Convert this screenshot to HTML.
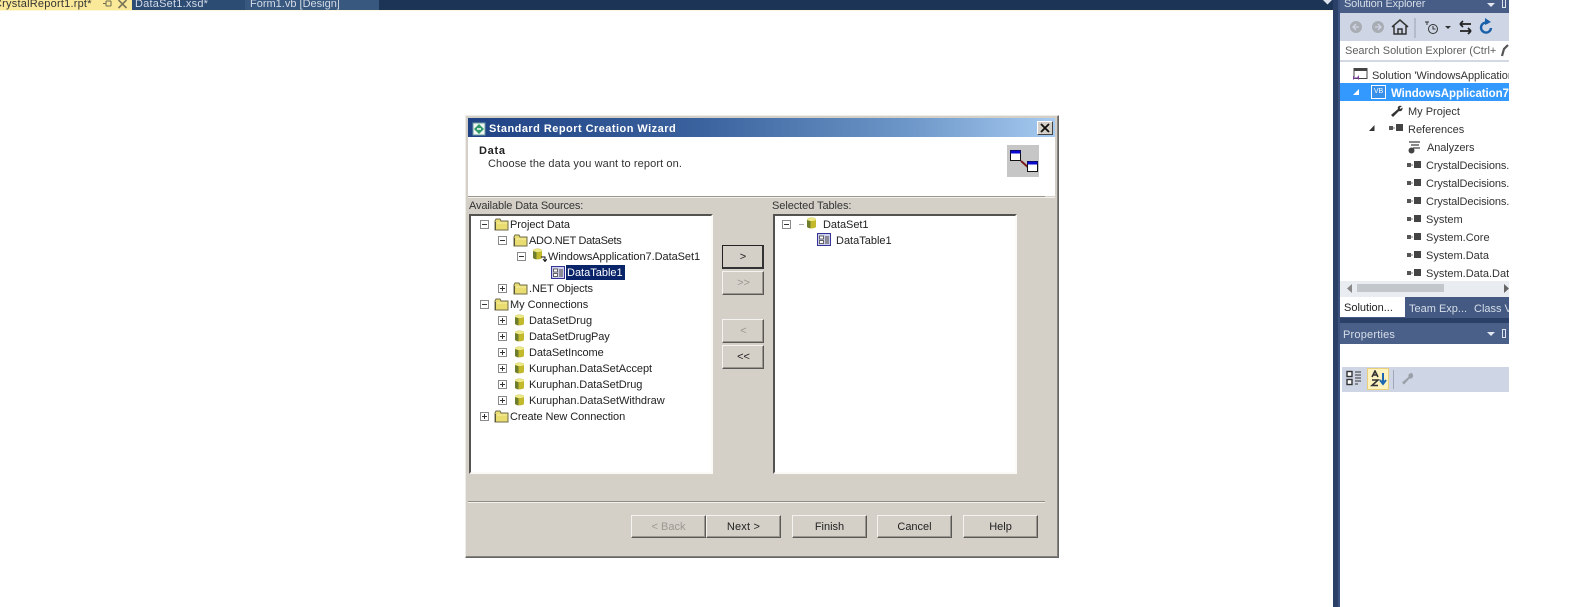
<!DOCTYPE html>
<html><head><meta charset="utf-8">
<style>
html,body{margin:0;padding:0;background:#fff;}
#p{position:relative;width:1569px;height:607px;overflow:hidden;background:#fff;font-family:"Liberation Sans",sans-serif;font-size:11px;color:#222;filter:blur(.3px);}
#p div,#p svg{position:absolute;}
.t{white-space:nowrap;line-height:14px;height:14px;margin-top:1px;}
.w{letter-spacing:-.05px;}
.btn{background:#d4d0c8;border:1px solid;border-color:#f4f3ef #5a5854 #5a5854 #f4f3ef;box-sizing:border-box;text-align:center;line-height:22px;color:#222;box-shadow:inset -1px -1px 0 #9a9790;}
.dis{color:#9a9892;}
.tree{background:#fff;box-sizing:border-box;border:2px solid;border-color:#55534f #fbfaf6 #fbfaf6 #55534f;}
.exp{width:9px;height:9px;box-sizing:border-box;border:1px solid #8a8a8a;background:#fff;}
.exp:before{content:"";position:absolute;left:1px;top:3px;width:5px;height:1px;background:#333;}
.plus:after{content:"";position:absolute;left:3px;top:1px;width:1px;height:5px;background:#333;}
.se{color:#333;font-size:11px;letter-spacing:0;}
</style></head><body>
<div id="p">
<svg width="0" height="0" style="left:0;top:0">
<defs>
<symbol id="folder" viewBox="0 0 15 13"><path d="M1 3 L2 1 H6 L7 3 H14 V12 H1 Z" fill="#e9dd72" stroke="#6f6c48" stroke-width="1"/><path d="M1 12 V4 H2 V12Z" fill="#55533a"/><path d="M3 5 H13" stroke="#f8f0a0"/></symbol>
<symbol id="db" viewBox="0 0 11 12"><path d="M1 2.500 C1 0 10 0 10 2.500 V9.500 C10 12 1 12 1 9.500 Z" fill="#c2b92c"/><path d="M1 2.500 C1 4.500 10 4.500 10 2.500 C10 .5 1 .5 1 2.500Z" fill="#eee98a"/><path d="M1 3 V9.500 C1 10.500 3 11.300 4.500 11.300 V4.300 Z" fill="#6f7e2e"/></symbol>
<symbol id="tbl" viewBox="0 0 14 13"><rect x=".5" y=".5" width="13" height="12" fill="#cfd0ec" stroke="#33339a"/><rect x="2.500" y="3" width="4" height="3" fill="#fff" stroke="#444" stroke-width=".8"/><rect x="2.500" y="7.500" width="4" height="3" fill="#fff" stroke="#444" stroke-width=".8"/><path d="M8 4h4M8 6h4M8 8h4M8 10h4" stroke="#444" stroke-width="1"/></symbol>
<symbol id="ref" viewBox="0 0 14 8"><rect x="0" y="2" width="4" height="4" fill="#555"/><rect x="4" y="3.500" width="2" height="1" fill="#777"/><rect x="7" y="0" width="7" height="7" fill="#444"/></symbol>
</defs></svg>

<!-- top tab bar -->
<div style="left:0;top:0;width:1333px;height:10px;background:#1c3557"></div>
<div style="left:0;top:10px;width:1333px;height:1px;background:#fdf8dc"></div>
<div style="left:0;top:0;width:132px;height:10px;background:#fbe99a"></div>
<div style="left:132px;top:0;width:113px;height:10px;background:#2d4c74"></div>
<div style="left:245px;top:0;width:134px;height:10px;background:#39587f"></div>
<div class="t" style="left:-6px;top:-4px;color:#333;letter-spacing:.22px">CrystalReport1.rpt*</div>
<svg style="left:103px;top:0" width="9" height="8"><path d="M0 3.500H3M3 1V6M3 1H8M3 6H8M8 1V6" stroke="#6d6a50" fill="none"/></svg>
<svg style="left:117px;top:0" width="12" height="9"><path d="M1.500 0 L9.500 8 M9.500 0 L1.500 8" stroke="#7b7858" stroke-width="1.600"/></svg>
<div class="t" style="left:135px;top:-4px;color:#d3dbe8;letter-spacing:.22px">DataSet1.xsd*</div>
<div class="t" style="left:250px;top:-4px;color:#d3dbe8">Form1.vb [Design]</div>
<svg style="left:1322px;top:0" width="11" height="5"><path d="M1 0 H10 L5.500 4.500Z" fill="#dfe5ee"/></svg>

<!-- navy strip -->
<div style="left:1333px;top:0;width:7px;height:607px;background:#2a4066"></div>
<div style="left:1338px;top:0;width:2px;height:607px;background:#3d5480"></div>

<!-- solution explorer -->
<div style="left:1340px;top:0;width:169px;height:13px;background:#475d86"></div>
<div class="t se" style="left:1344px;top:-4px;color:#d8dfea;letter-spacing:-.15px">Solution Explorer</div>
<svg style="left:1487px;top:3px" width="8" height="5"><path d="M0 0H8L4 4Z" fill="#e2e7f0"/></svg>
<div style="left:1502px;top:0;width:4px;height:8px;border:1px solid #dfe5ee;border-top:0;box-sizing:border-box"></div>
<div style="left:1340px;top:13px;width:169px;height:28px;background:#ced6e6"></div>
<svg style="left:1340px;top:13px" width="168" height="28">
<circle cx="16" cy="14" r="6" fill="#a8acb3"/><circle cx="38" cy="14" r="6" fill="#a8acb3"/>
<path d="M13 14h6M16 11l-3 3 3 3M35 14h6M38 11l3 3-3 3" stroke="#ced6e6" fill="none" stroke-width="1.300"/>
<path d="M52 14 L60 7 L68 14 M54 13 V21 H66 V13 M58 21 V16 H62 V21" fill="none" stroke="#333" stroke-width="1.500"/>
<path d="M75 5 V25" stroke="#9ba3b3"/>
<circle cx="93" cy="16" r="4.500" fill="none" stroke="#333"/><path d="M93 13v3h2.500M85 9h4M87 9v3" stroke="#333" fill="none"/>
<path d="M105 13H111L108 16Z" fill="#333"/>
<path d="M120 11H131M120 11l3-3M120 11l3 3M120 18H131M131 18l-3-3M131 18l-3 3" stroke="#222" stroke-width="1.700" fill="none"/>
<path d="M148 10 A5 5 0 1 0 151 15" stroke="#1a5fa8" stroke-width="2.400" fill="none"/><path d="M145 5 L151 9 L145 12Z" fill="#1a5fa8"/>
</svg>
<div style="left:1342px;top:41px;width:167px;height:19px;background:#fff"></div>
<div style="left:1340px;top:60px;width:169px;height:2px;background:#d2d8e4"></div>
<div class="t se" style="left:1345px;top:43px;color:#5f5f5f;letter-spacing:-.02px">Search Solution Explorer (Ctrl+</div>
<svg style="left:1501px;top:44px" width="8" height="13"><path d="M7 1 L3 5 L1 12" stroke="#555" stroke-width="2.200" fill="none"/></svg>

<svg style="left:1353px;top:68px" width="15" height="13"><rect x="1" y=".5" width="13" height="10" fill="#fff" stroke="#444"/><rect x="1" y=".5" width="13" height="2.500" fill="#444"/><path d="M0 8 L3 11 L6 7 V12 L3 9 L0 12Z" fill="#7a3ea0"/></svg>
<div class="t se" style="left:1372px;top:68px;letter-spacing:-.05px">Solution 'WindowsApplication</div>

<div style="left:1340px;top:83px;width:169px;height:18px;background:#3399ff"></div>
<svg style="left:1352px;top:88px" width="8" height="8"><path d="M7 1V7H1Z" fill="#fff"/></svg>
<div style="left:1371px;top:85px;width:15px;height:14px;box-sizing:border-box;border:1px solid #fff;background:#3a8fe8;color:#fff;font-size:7px;line-height:12px;text-align:center">VB</div>
<div class="t" style="left:1391px;top:86px;color:#fff;font-weight:bold;font-size:11.500px;letter-spacing:-.08px">WindowsApplication7</div>

<svg style="left:1390px;top:104px" width="14" height="14"><path d="M12 2 C9 1 7 3 8 5 L1 11 L3 13 L9 7 C11 8 13 6 12.500 3.500 L10.500 5 L9.500 4Z" fill="#333"/></svg>
<div class="t se" style="left:1408px;top:104px">My Project</div>
<svg style="left:1369px;top:125px" width="6" height="6"><path d="M5.500 0V6H0Z" fill="#333"/></svg>
<svg style="left:1389px;top:124px" width="14" height="8"><use href="#ref"/></svg>
<div class="t se" style="left:1408px;top:122px">References</div>
<svg style="left:1408px;top:140px" width="13" height="14"><path d="M1 2H12M3 5H11M5 8H12" stroke="#444" stroke-width="1.300"/><circle cx="3.500" cy="10.500" r="3" fill="#444"/></svg>
<div class="t se" style="left:1427px;top:140px;letter-spacing:-.1px">Analyzers</div>
<svg style="left:1407px;top:161px" width="14" height="8"><use href="#ref"/></svg><div class="t se" style="left:1426px;top:158px;letter-spacing:-.1px">CrystalDecisions.</div>
<svg style="left:1407px;top:179px" width="14" height="8"><use href="#ref"/></svg><div class="t se" style="left:1426px;top:176px;letter-spacing:-.1px">CrystalDecisions.</div>
<svg style="left:1407px;top:197px" width="14" height="8"><use href="#ref"/></svg><div class="t se" style="left:1426px;top:194px;letter-spacing:-.1px">CrystalDecisions.</div>
<svg style="left:1407px;top:215px" width="14" height="8"><use href="#ref"/></svg><div class="t se" style="left:1426px;top:212px">System</div>
<svg style="left:1407px;top:233px" width="14" height="8"><use href="#ref"/></svg><div class="t se" style="left:1426px;top:230px">System.Core</div>
<svg style="left:1407px;top:251px" width="14" height="8"><use href="#ref"/></svg><div class="t se" style="left:1426px;top:248px">System.Data</div>
<svg style="left:1407px;top:269px" width="14" height="8"><use href="#ref"/></svg><div class="t se" style="left:1426px;top:266px">System.Data.Dat</div>

<div style="left:1340px;top:281px;width:169px;height:16px;background:#e9ecf1"></div>
<div style="left:1357px;top:284px;width:87px;height:8px;background:#c3c6cb"></div>
<svg style="left:1347px;top:284px" width="6" height="9"><path d="M5 0V9L0 4.500Z" fill="#888"/></svg>
<svg style="left:1504px;top:284px" width="5" height="9"><path d="M0 0V9L5 4.500Z" fill="#666"/></svg>

<div style="left:1340px;top:297px;width:169px;height:21px;background:#445a82"></div>
<div style="left:1340px;top:297px;width:65px;height:20px;background:#fff"></div>
<div class="t se" style="left:1344px;top:300px;color:#222">Solution...</div>
<div class="t se" style="left:1409px;top:301px;color:#d6deea">Team Exp...</div>
<div class="t se" style="left:1474px;top:301px;color:#d6deea">Class V</div>
<div style="left:1340px;top:318px;width:169px;height:5px;background:#2a4066"></div>

<div style="left:1340px;top:323px;width:169px;height:21px;background:#4a6088"></div>
<div class="t se" style="left:1343px;top:327px;color:#d8dfea;letter-spacing:.2px">Properties</div>
<svg style="left:1487px;top:332px" width="8" height="5"><path d="M0 0H8L4 4Z" fill="#e2e7f0"/></svg>
<div style="left:1502px;top:329px;width:4px;height:9px;border:1px solid #dfe5ee;box-sizing:border-box"></div>

<div style="left:1342px;top:367px;width:167px;height:25px;background:#ced6e6"></div>
<div style="left:1367px;top:368px;width:22px;height:22px;background:#fdf3c0;border:1px solid #e8cf78;box-sizing:border-box"></div>
<svg style="left:1346px;top:370px" width="18" height="17"><rect x="1" y="1.500" width="5" height="5" fill="#fff" stroke="#333" stroke-width="1.400"/><rect x="1" y="9.500" width="5" height="5" fill="#fff" stroke="#333" stroke-width="1.400"/><path d="M9 2h6M9 5h6M9 8h6M9 11h6M9 14h3" stroke="#555" stroke-width="1.300"/></svg>
<svg style="left:1370px;top:370px" width="18" height="17"><path d="M2 7 L5 1 L8 7M3 5H7" stroke="#333" stroke-width="1.600" fill="none"/><path d="M2 10H8L2 15.500H8" stroke="#333" stroke-width="1.600" fill="none"/><path d="M13 3V13M10 10L13 14L16 10" stroke="#1a66b0" stroke-width="2" fill="none"/></svg>
<div style="left:1393px;top:370px;width:1px;height:19px;background:#a0a9bb"></div>
<svg style="left:1401px;top:372px" width="13" height="13"><path d="M11 1 C8 1 7 3 7.500 5 L1 10.500 L3 12.500 L8.500 6.500 C10.500 7 12.500 5.500 12 3" fill="#9a9fa8"/></svg>

<!-- clip the sidebar -->
<div style="left:1509px;top:0;width:60px;height:607px;background:#fff"></div>

<!-- dialog -->
<div style="left:465px;top:115px;width:594px;height:443px;background:#d4d0c8;box-sizing:border-box;border:1px solid;border-color:#eeece6 #666 #666 #eeece6;box-shadow:inset -1px -1px 0 #85827c"></div>
<div style="left:468px;top:118px;width:587px;height:19px;background:linear-gradient(90deg,#1f4285 0%,#3b639e 40%,#6d97c8 75%,#a6caf0 100%)"></div>
<svg style="left:472px;top:121px" width="14" height="15"><rect x="1" y="2" width="12" height="12" fill="#f0f6f0" stroke="#6a9aa0"/><path d="M2 8 L7 3 L12 8 L7 13Z" fill="#2f9a6a"/><path d="M5 8H9" stroke="#fff" stroke-width="1.500"/></svg>
<div class="t" style="left:489px;top:121px;color:#fff;font-weight:bold;letter-spacing:.46px">Standard Report Creation Wizard</div>
<div style="left:1037px;top:121px;width:16px;height:14px;background:#d4d0c8;box-sizing:border-box;border:1px solid;border-color:#fff #444 #444 #fff"></div>
<svg style="left:1040px;top:123px" width="10" height="10"><path d="M1 1 L9 9 M9 1 L1 9" stroke="#111" stroke-width="1.800"/></svg>

<div style="left:468px;top:137px;width:587px;height:59px;background:#fff"></div>
<div style="left:468px;top:196px;width:577px;height:1px;background:#9a978f"></div>
<div style="left:468px;top:197px;width:587px;height:1px;background:#f2f0ea"></div>
<div class="t" style="left:479px;top:143px;font-weight:bold;color:#222;letter-spacing:.7px">Data</div>
<div class="t" style="left:488px;top:156px;color:#333;letter-spacing:.1px">Choose the data you want to report on.</div>
<div style="left:1007px;top:145px;width:32px;height:32px;background:#c6c6c6"></div>
<svg style="left:1007px;top:145px" width="32" height="32"><path d="M14 16L23 24" stroke="#7a1a1a" stroke-width="2"/><rect x="3.500" y="5.500" width="10" height="10" fill="#fff" stroke="#111"/><rect x="3.500" y="5.500" width="10" height="3" fill="#0a0ad0"/><rect x="20.500" y="16.500" width="10" height="10" fill="#fff" stroke="#111"/><rect x="20.500" y="16.500" width="10" height="3" fill="#0a0ad0"/></svg>

<div class="t" style="left:469px;top:198px;color:#333;letter-spacing:-.13px">Available Data Sources:</div>
<div class="t" style="left:772px;top:198px;color:#333;letter-spacing:-.07px">Selected Tables:</div>

<div class="tree" style="left:469px;top:214px;width:244px;height:260px"></div>
<div class="tree" style="left:773px;top:214px;width:244px;height:260px"></div>

<!-- left tree -->
<div class="exp" style="left:480px;top:220px"></div><svg style="left:494px;top:218px" width="15" height="13"><use href="#folder"/></svg><div class="t w" style="left:510px;top:217px">Project Data</div>
<div class="exp" style="left:498px;top:236px"></div><svg style="left:513px;top:234px" width="15" height="13"><use href="#folder"/></svg><div class="t" style="left:529px;top:233px;letter-spacing:-.28px">ADO.NET DataSets</div>
<div class="exp" style="left:517px;top:252px"></div><svg style="left:532px;top:248px" width="11" height="12"><use href="#db"/></svg><svg style="left:541px;top:256px" width="6" height="6"><path d="M0 1H4V5M2 3L4 5.500L6 3" stroke="#111" fill="none"/></svg><div class="t w" style="left:548px;top:249px">WindowsApplication7.DataSet1</div>
<svg style="left:551px;top:266px" width="14" height="13"><use href="#tbl"/></svg>
<div style="left:566px;top:265px;width:59px;height:15px;background:#0a246a"></div><div class="t" style="left:567px;top:265px;color:#fff;letter-spacing:0">DataTable1</div>
<div class="exp plus" style="left:498px;top:284px"></div><svg style="left:513px;top:282px" width="15" height="13"><use href="#folder"/></svg><div class="t" style="left:529px;top:281px;letter-spacing:-.11px">.NET Objects</div>
<div class="exp" style="left:480px;top:300px"></div><svg style="left:494px;top:298px" width="15" height="13"><use href="#folder"/></svg><div class="t w" style="left:510px;top:297px">My Connections</div>
<div class="exp plus" style="left:498px;top:316px"></div><svg style="left:514px;top:314px" width="11" height="12"><use href="#db"/></svg><div class="t w" style="left:529px;top:313px">DataSetDrug</div>
<div class="exp plus" style="left:498px;top:332px"></div><svg style="left:514px;top:330px" width="11" height="12"><use href="#db"/></svg><div class="t" style="left:529px;top:329px;letter-spacing:-.14px">DataSetDrugPay</div>
<div class="exp plus" style="left:498px;top:348px"></div><svg style="left:514px;top:346px" width="11" height="12"><use href="#db"/></svg><div class="t" style="left:529px;top:345px;letter-spacing:-.09px">DataSetIncome</div>
<div class="exp plus" style="left:498px;top:364px"></div><svg style="left:514px;top:362px" width="11" height="12"><use href="#db"/></svg><div class="t w" style="left:529px;top:361px">Kuruphan.DataSetAccept</div>
<div class="exp plus" style="left:498px;top:380px"></div><svg style="left:514px;top:378px" width="11" height="12"><use href="#db"/></svg><div class="t w" style="left:529px;top:377px">Kuruphan.DataSetDrug</div>
<div class="exp plus" style="left:498px;top:396px"></div><svg style="left:514px;top:394px" width="11" height="12"><use href="#db"/></svg><div class="t" style="left:529px;top:393px;letter-spacing:-.03px">Kuruphan.DataSetWithdraw</div>
<div class="exp plus" style="left:480px;top:412px"></div><svg style="left:494px;top:410px" width="15" height="13"><use href="#folder"/></svg><div class="t" style="left:510px;top:409px;letter-spacing:-.08px">Create New Connection</div>

<!-- right tree -->
<div class="exp" style="left:782px;top:220px"></div><div style="left:799px;top:224px;width:5px;height:1px;background:#aaa"></div><svg style="left:806px;top:217px" width="11" height="12"><use href="#db"/></svg><div class="t w" style="left:823px;top:217px">DataSet1</div>
<svg style="left:817px;top:233px" width="14" height="13"><use href="#tbl"/></svg><div class="t" style="left:836px;top:233px">DataTable1</div>

<!-- arrows -->
<div class="btn" style="left:722px;top:245px;width:42px;height:24px;border:1px solid #222;border-right:2px solid #333;border-bottom:2px solid #333;box-shadow:none;padding-left:1px">&gt;</div>
<div class="btn dis" style="left:722px;top:271px;width:42px;height:24px;padding-left:1px">&gt;&gt;</div>
<div class="btn dis" style="left:722px;top:319px;width:42px;height:24px;padding-left:1px">&lt;</div>
<div class="btn" style="left:722px;top:345px;width:42px;height:24px;padding-left:1px">&lt;&lt;</div>

<!-- footer -->
<div style="left:468px;top:501px;width:577px;height:1px;background:#8f8c85"></div>
<div style="left:468px;top:502px;width:577px;height:1px;background:#f4f2ec"></div>
<div class="btn dis" style="left:631px;top:515px;width:75px;height:23px">&lt; Back</div>
<div class="btn" style="left:706px;top:515px;width:75px;height:23px;letter-spacing:.2px">Next &gt;</div>
<div class="btn" style="left:792px;top:515px;width:75px;height:23px">Finish</div>
<div class="btn" style="left:877px;top:515px;width:75px;height:23px">Cancel</div>
<div class="btn" style="left:963px;top:515px;width:75px;height:23px">Help</div>
</div>
</body></html>
